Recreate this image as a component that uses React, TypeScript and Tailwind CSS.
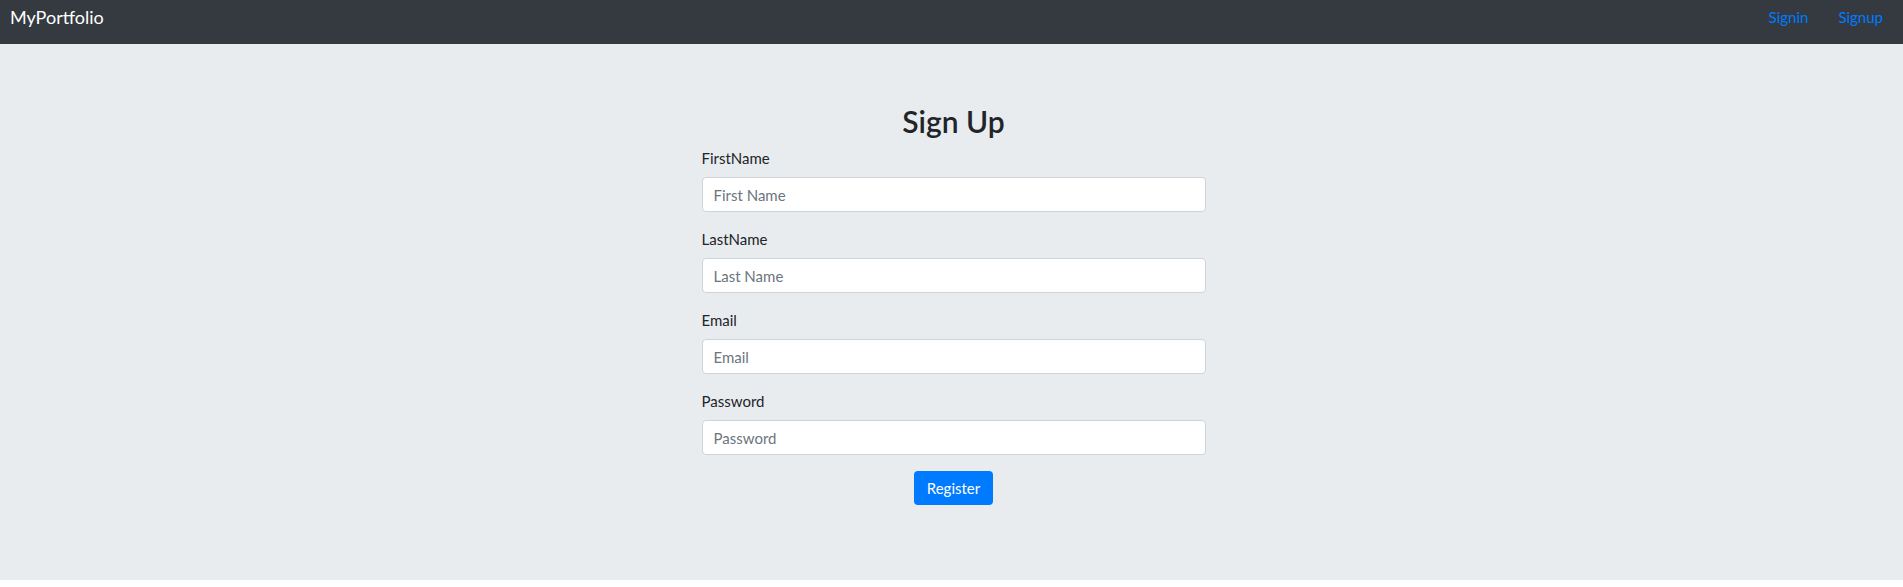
import React from "react";

export default function App() {
  const fields = [
    { label: "FirstName", placeholder: "First Name", type: "text" },
    { label: "LastName", placeholder: "Last Name", type: "text" },
    { label: "Email", placeholder: "Email", type: "email" },
    { label: "Password", placeholder: "Password", type: "password" },
  ];
  return (
    <div className="w-full bg-white" style={{ fontFamily: 'Lato, "Noto Sans", sans-serif' }}>
      <nav className="h-[44px] bg-[#343a40] flex items-start justify-between pl-[10px] pr-[20px]">
        <a className="text-white text-[18px] leading-[27px] pt-[4px]">MyPortfolio</a>
        <div className="flex items-start gap-[30px] pt-[6px]">
          <a className="text-[#007bff] text-[15px] leading-[22px]">Signin</a>
          <a className="text-[#007bff] text-[15px] leading-[22px]">Signup</a>
        </div>
      </nav>
      <main className="h-[536px] bg-[#e9ecef] pt-[59px] pl-[4px]">
        <div className="w-[504px] mx-auto text-[#212529]">
          <h2 className="text-center text-[30px] leading-[36px] font-semibold mb-[8px]">Sign Up</h2>
          {fields.map((f) => (
            <div key={f.label} className="mb-[16px]">
              <label className="block text-[15px] leading-[22px] mb-[8px]">{f.label}</label>
              <input
                type={f.type}
                placeholder={f.placeholder}
                className="block w-full h-[35px] px-[11px] bg-white border border-[#ced4da] rounded-[4px] text-[15px] text-[#495057] placeholder:text-[#6c757d] outline-none"
              />
            </div>
          ))}
          <div className="flex justify-center">
            <button className="h-[34px] px-[13px] bg-[#007bff] text-white text-[15px] leading-[22px] rounded-[4px]">Register</button>
          </div>
        </div>
      </main>
    </div>
  );
}
